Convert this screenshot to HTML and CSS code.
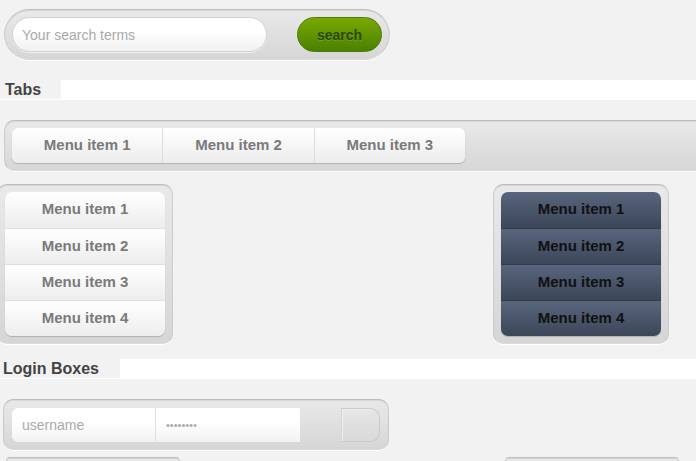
FILE: index.html
```html
<!DOCTYPE html>
<html lang="en">
<head>
    <meta charset="UTF-8">
    <meta name="viewport" content="width=device-width, initial-scale=1.0">
    <title>UI Kit</title>
    <link rel="stylesheet" href="styles.css">
</head>
<body>
    <form class="search-bar" action="#" method="get">
        <input type="text" class="search-input" name="q" placeholder="Your search terms">
        <button type="submit" class="search-button">search</button>
    </form>

    <h2 class="section-title"><span>Tabs</span></h2>
    <div class="tab-bar">
        <ul class="tabs">
            <li>Menu item 1</li>
            <li>Menu item 2</li>
            <li>Menu item 3</li>
        </ul>
    </div>

    <div class="menu-row">
        <div class="menu-well menu-well-left">
            <ul class="vmenu">
                <li>Menu item 1</li>
                <li>Menu item 2</li>
                <li>Menu item 3</li>
                <li>Menu item 4</li>
            </ul>
        </div>
        <div class="menu-well">
            <ul class="vmenu vmenu-dark">
                <li>Menu item 1</li>
                <li>Menu item 2</li>
                <li>Menu item 3</li>
                <li>Menu item 4</li>
            </ul>
        </div>
    </div>

    <h2 class="section-title login-title"><span>Login Boxes</span></h2>
    <form class="login-bar" action="#" method="post">
        <input type="text" class="login-user" name="username" placeholder="username">
        <input type="password" class="login-pass" name="password" value="12345678">
        <button type="submit" class="login-button"></button>
    </form>

    <div class="more-row">
        <div class="more-box"></div>
        <div class="more-box more-box-right"></div>
    </div>
</body>
</html>
```

FILE: styles.css
```css
html, body {
    overflow: hidden;
}
body {
    margin: 0;
    background: #f2f2f2;
    font-family: "Liberation Sans", Arial, sans-serif;
}
ul {
    list-style: none;
    margin: 0;
    padding: 0;
}

/* shared grey well */
.search-bar,
.tab-bar,
.menu-well,
.login-bar,
.more-box {
    background: linear-gradient(#e9e9e9, #d6d6d6);
    border: 1px solid #cdcdcd;
    border-top-color: #bcbcbc;
    border-bottom-color: #dadada;
    box-shadow: 0 1px 0 #fff, inset 0 1px 1px rgba(0, 0, 0, 0.08);
}

/* search */
.search-bar {
    display: flex;
    justify-content: space-between;
    align-items: center;
    box-sizing: border-box;
    width: 386px;
    height: 51px;
    margin: 9px 0 0 4px;
    padding: 0 7px;
    border-radius: 26px;
}
.search-input {
    box-sizing: border-box;
    width: 255px;
    height: 35px;
    padding: 0 9px;
    border: 1px solid #d2d2d2;
    border-radius: 18px;
    background: linear-gradient(#fff 40%, #f1f1f1);
    box-shadow: 0 1px 0 #efefef;
    font: 14px "Liberation Sans", Arial, sans-serif;
    color: #555;
    outline: none;
}
.search-input::placeholder,
.login-user::placeholder {
    color: #aaa;
}
.search-button {
    width: 85px;
    height: 35px;
    border: 1px solid #4b7c06;
    border-radius: 18px;
    background: linear-gradient(#79a900, #4a8000);
    color: #2a470a;
    font: bold 14px "Liberation Sans", Arial, sans-serif;
    text-shadow: 0 1px 0 rgba(255, 255, 255, 0.15);
    cursor: pointer;
}

/* section headings */
.section-title {
    height: 20px;
    margin: 20px 0 0;
    background: #fff;
    font-size: 16px;
    line-height: 19px;
    color: #444;
}
.section-title span {
    display: inline-block;
    height: 19px;
    padding: 0 20px 0 5px;
    background: #f2f2f2;
}
.login-title {
    margin-top: 15px;
}
.login-title span {
    padding: 0 21px 0 3px;
}

/* horizontal tabs */
.tab-bar {
    box-sizing: border-box;
    width: 760px;
    height: 51px;
    margin: 20px 0 0 4px;
    padding: 7px 7px;
    border-radius: 10px 0 0 10px;
}
.tabs {
    display: flex;
    width: 453px;
    height: 35px;
    border-radius: 6px;
    background: linear-gradient(#fff, #ececec);
    box-shadow: 0 1px 1px rgba(0, 0, 0, 0.18);
}
.tabs li {
    flex: 1;
    line-height: 34px;
    text-align: center;
    font-size: 15px;
    font-weight: bold;
    color: #7a7a7a;
}
.tabs li + li {
    border-left: 1px solid #dcdcdc;
}

/* vertical menus */
.menu-row {
    display: flex;
    gap: 320px;
    margin: 13px 0 0 -3px;
}
.menu-well {
    padding: 7px;
    border-radius: 10px;
}
.vmenu {
    width: 160px;
    border-radius: 7px;
    overflow: hidden;
    box-shadow: 0 1px 1px rgba(0, 0, 0, 0.18);
}
.vmenu li {
    height: 36px;
    line-height: 34px;
    text-align: center;
    font-size: 15px;
    font-weight: bold;
    color: #7a7a7a;
    background: linear-gradient(#fff, #ededed);
}
.vmenu li + li {
    height: 35px;
    border-top: 1px solid #dedede;
}
.vmenu-dark li {
    color: #111;
    background: linear-gradient(#58657c, #3b4658);
}
.vmenu-dark li + li {
    border-top-color: #343d4c;
}

/* login */
.login-bar {
    display: flex;
    align-items: center;
    box-sizing: border-box;
    width: 386px;
    height: 51px;
    margin: 20px 0 0 3px;
    padding: 0 8px;
    border-radius: 10px;
}
.login-user,
.login-pass {
    box-sizing: border-box;
    height: 34px;
    padding: 0 10px;
    border: none;
    background: linear-gradient(#fff 40%, #f2f2f2);
    font: 14px "Liberation Sans", Arial, sans-serif;
    color: #999;
    outline: none;
}
.login-user {
    width: 144px;
    border-right: 1px solid #dedede;
    border-radius: 6px 0 0 6px;
}
.login-pass {
    width: 144px;
    font-size: 11px;
    color: #aaa;
    letter-spacing: 0;
}
.login-button {
    width: 39px;
    height: 34px;
    margin-left: auto;
    border: 1px solid #cacaca;
    border-left-color: #d4d4d4;
    border-radius: 0 10px 10px 0;
    background: linear-gradient(#e6e6e6, #d9d9d9);
    box-shadow: inset 1px 1px 0 #efefef;
    cursor: pointer;
}

/* next row, cut off by the window */
.more-row {
    display: flex;
    gap: 325px;
    margin: 7px 0 0 6px;
}
.more-box {
    width: 172px;
    height: 40px;
    border-radius: 4px;
}
```
